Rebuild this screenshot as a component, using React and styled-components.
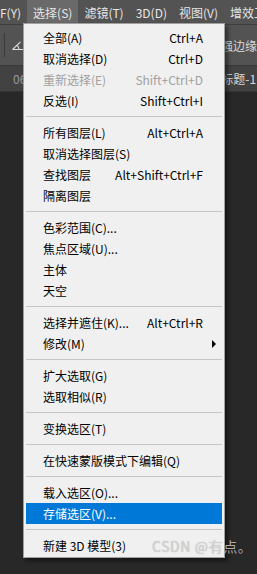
import React from 'react';
import styled, { createGlobalStyle } from 'styled-components';

const GlobalStyle = createGlobalStyle`
  html, body {
    margin: 0;
    padding: 0;
    background: #282828;
  }
  body {
    font-family: "Noto Sans CJK SC", "Noto Sans", sans-serif;
  }
`;

const Screen = styled.div`
  position: relative;
  width: 257px;
  height: 574px;
  overflow: hidden;
  display: flex;
  flex-direction: column;
  background: #282828;
`;

const MenuBar = styled.div`
  height: 24px;
  display: flex;
  align-items: stretch;
  background: #535353;
  color: #e6e6e6;
  font-size: 12px;
  white-space: nowrap;
  margin-left: -6px;
`;

const BarItem = styled.div`
  display: flex;
  align-items: center;
  padding: 0 6px;
  background: ${(p) => (p.$active ? '#6a6a6a' : 'transparent')};
`;

const OptionsBar = styled.div`
  height: 40px;
  display: flex;
  align-items: center;
  background: #535353;
  border-top: 1px solid #3e3e3e;
  border-bottom: 1px solid #3a3a3a;
  color: #e0e0e0;
  font-size: 12px;
`;

const ToolGroup = styled.div`
  display: flex;
  align-items: center;
  gap: 6px;
  padding-left: 4px;
  width: 212px;
`;

const VLine = styled.div`
  width: 1px;
  height: 24px;
  background: #3a3a3a;
`;

const TabBar = styled.div`
  height: 25px;
  display: flex;
  align-items: center;
  background: #424242;
  color: #9a9a9a;
  font-size: 12px;
  padding-left: 13px;
  border-bottom: 1px solid #333;
`;

const TabTitle = styled.span`
  color: #d8d8d8;
  white-space: nowrap;
  margin-left: ${(p) => p.$offset}px;
`;

const Workspace = styled.div`
  flex: 1;
  background: #282828;
`;

const Dropdown = styled.div`
  position: absolute;
  left: 23px;
  top: 23px;
  width: 196px;
  padding: 3px 2px 1px 2px;
  background: #f0f0f0;
  border: 1px solid #a0a0a0;
  box-shadow: 3px 3px 4px rgba(0, 0, 0, 0.45);
  font-size: 12px;
  color: #000;
`;

const Item = styled.div`
  position: relative;
  height: 21px;
  display: flex;
  align-items: center;
  justify-content: space-between;
  padding: 0 19px 0 17px;
  white-space: nowrap;
  color: ${(p) => (p.$disabled ? '#a0a0a0' : p.$active ? '#ffffff' : '#000000')};
  background: ${(p) => (p.$active ? '#0078d7' : 'transparent')};
`;

const Shortcut = styled.span`
  margin-left: 12px;
`;

const Arrow = styled.span`
  position: absolute;
  right: 6px;
  top: 7px;
  width: 0;
  height: 0;
  border-top: 4px solid transparent;
  border-bottom: 4px solid transparent;
  border-left: 4px solid #000;
`;

const Separator = styled.div`
  height: 11px;
  display: flex;
  align-items: center;

  &::before {
    content: '';
    flex: 1;
    height: 1px;
    margin-top: -1px;
    background: #c5c5c5;
  }
`;

const Watermark = styled.div`
  position: absolute;
  left: 152px;
  top: 536px;
  font-size: 14px;
  color: rgba(220, 220, 220, 0.75);
  text-shadow: 0 0 1px rgba(0, 0, 0, 0.3);
  white-space: nowrap;
  letter-spacing: 0.6px;
`;

const groups = [
  [
    { label: '全部(A)', key: 'Ctrl+A' },
    { label: '取消选择(D)', key: 'Ctrl+D' },
    { label: '重新选择(E)', key: 'Shift+Ctrl+D', disabled: true },
    { label: '反选(I)', key: 'Shift+Ctrl+I' },
  ],
  [
    { label: '所有图层(L)', key: 'Alt+Ctrl+A' },
    { label: '取消选择图层(S)' },
    { label: '查找图层', key: 'Alt+Shift+Ctrl+F' },
    { label: '隔离图层' },
  ],
  [
    { label: '色彩范围(C)...' },
    { label: '焦点区域(U)...' },
    { label: '主体' },
    { label: '天空' },
  ],
  [
    { label: '选择并遮住(K)...', key: 'Alt+Ctrl+R' },
    { label: '修改(M)', submenu: true },
  ],
  [
    { label: '扩大选取(G)' },
    { label: '选取相似(R)' },
  ],
  [{ label: '变换选区(T)' }],
  [{ label: '在快速蒙版模式下编辑(Q)' }],
  [
    { label: '载入选区(O)...' },
    { label: '存储选区(V)...', active: true },
  ],
  [{ label: '新建 3D 模型(3)' }],
];

const menus = ['F(Y)', '选择(S)', '滤镜(T)', '3D(D)', '视图(V)', '增效工具'];

const App = () => (
  <>
    <GlobalStyle />
    <Screen>
      <MenuBar>
        {menus.map((m) => (
          <BarItem key={m} $active={m === '选择(S)'}>{m}</BarItem>
        ))}
      </MenuBar>
      <OptionsBar>
        <ToolGroup>
          <VLine />
          <svg width="12" height="9" viewBox="0 0 12 9" style={{ marginLeft: 1 }}>
            <path d="M0.5 8.5 L8.5 0.8 M0.5 8.5 H11.5 M5 4.5 Q7 5.5 7 8.5" stroke="#dcdcdc" strokeWidth="1.1" fill="none" />
          </svg>
        </ToolGroup>
        <TabTitle $offset={4}>增强边缘</TabTitle>
      </OptionsBar>
      <TabBar>
        <span>06</span>
        <TabTitle $offset={183}>未标题-1</TabTitle>
      </TabBar>
      <Workspace />
      <Dropdown>
        {groups.map((g, i) => (
          <React.Fragment key={i}>
            {i > 0 && <Separator />}
            {g.map((it) => (
              <Item key={it.label} $disabled={it.disabled} $active={it.active}>
                <span>{it.label}</span>
                {it.key && <Shortcut>{it.key}</Shortcut>}
                {it.submenu && <Arrow />}
              </Item>
            ))}
          </React.Fragment>
        ))}
      </Dropdown>
      <Watermark>CSDN @有点。</Watermark>
    </Screen>
  </>
);

export default App;
